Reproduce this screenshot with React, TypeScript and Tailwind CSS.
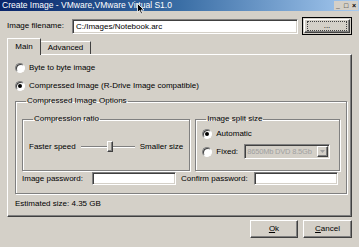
import React from "react";

const sunken =
  "border border-t-[#808080] border-l-[#808080] border-b-white border-r-white shadow-[inset_1px_1px_0_#404040,inset_-1px_-1px_0_#d4d0c8]";
const raised =
  "border border-t-white border-l-white border-b-[#404040] border-r-[#404040] shadow-[inset_-1px_-1px_0_#808080]";

function Radio({ checked, label }: { checked?: boolean; label: string }) {
  return (
    <div className="flex items-center gap-[4px] whitespace-nowrap">
      <span className="relative flex h-[10px] w-[10px] items-center justify-center rounded-full border border-t-[#808080] border-l-[#808080] border-b-white border-r-white bg-white shadow-[inset_1px_1px_0_#404040]">
        {checked && <span className="h-[4px] w-[4px] rounded-full bg-black" />}
      </span>
      <span>{label}</span>
    </div>
  );
}

function Group({
  title,
  className,
  children,
}: {
  title: string;
  className?: string;
  children: React.ReactNode;
}) {
  return (
    <fieldset className={"border border-[#808080] shadow-[1px_1px_0_white,inset_1px_1px_0_white] " + (className ?? "")}>
      <legend className="ml-[4px] px-[1px] leading-[10px]">{title}</legend>
      {children}
    </fieldset>
  );
}

export default function App() {
  return (
    <div
      className="relative h-[247px] w-[359px] overflow-hidden whitespace-nowrap bg-[#d4d0c8] text-[8px] leading-[10px] text-black"
      style={{ fontFamily: '"Liberation Sans", Arial, sans-serif' }}
    >
      {/* title bar */}
      <div className="flex h-[11px] items-center justify-between bg-gradient-to-r from-[#0a246a] via-[#3a6ea5] to-[#a6caf0] pl-[2px] pr-[1px]">
        <span className="text-[8.5px] leading-[11px] text-white">
          Create Image - VMware,VMware Virtual S1.0
        </span>
        <div className="flex">
          {["_", "□", "×"].map((c) => (
            <span
              key={c}
              className="flex h-[9px] w-[8px] items-center justify-center bg-[#d4d0c8] text-[7px] leading-[9px] font-bold"
            >
              {c}
            </span>
          ))}
        </div>
      </div>

      {/* cursor */}
      <svg className="absolute left-[137px] top-[3px]" width="8" height="12" viewBox="0 0 8 12">
        <path d="M0.5 0.5 L0.5 9.5 L2.5 7.5 L4 11 L5.5 10.3 L4 7 L7 7 Z" fill="black" stroke="white" strokeWidth="0.8" />
      </svg>

      <div className="px-[7px] pt-[6px]">
        {/* filename row */}
        <div className="flex items-center">
          <span className="w-[65px]">Image filename:</span>
          <div className={"h-[15px] w-[226px] bg-white px-[3px] leading-[13px] " + sunken}>
            C:/Images/Notebook.arc
          </div>
          <button className="ml-[4px] h-[18px] w-[50px] border border-black bg-[#d4d0c8] p-[1px]">
            <div className={"flex h-full w-full items-center justify-center " + raised}>
              <div className="flex h-[10px] w-[40px] items-center justify-center border border-dotted border-[#404040] leading-[6px]">
                ...
              </div>
            </div>
          </button>
        </div>

        {/* tabs */}
        <div className="mt-[3px] flex items-end">
          <div className="relative z-10 -mb-[1px] flex h-[17px] w-[34px] items-center justify-center border-l border-t border-r border-l-white border-t-white border-r-[#404040] bg-[#d4d0c8]">
            Main
          </div>
          <div className="flex h-[13px] w-[50px] items-center justify-center border-t border-r border-t-white border-r-[#404040] bg-[#d4d0c8]">
            Advanced
          </div>
        </div>

        {/* panel */}
        <div className="h-[163px] w-[345px] border border-t-white border-l-white border-b-[#404040] border-r-[#404040] px-[7px] pt-[8px] shadow-[inset_-1px_-1px_0_#808080]">
          <Radio label="Byte to byte image" />
          <div className="mt-[8px]">
            <Radio checked label="Compressed Image (R-Drive Image compatible)" />
          </div>

          <Group title="Compressed Image Options" className="mt-[5px] h-[98px] w-[329px] px-[6px]">
            <div className="mt-[8px] flex gap-[5px]">
              <Group title="Compression ratio" className="h-[57px] w-[167px] px-[6px]">
                <div className="mt-[17px] flex items-center">
                  <span>Faster speed</span>
                  <div className="relative ml-[5px] flex h-[11px] w-[54px] items-center">
                    <div className="h-[2px] w-full border-t border-t-[#808080] border-b border-b-white bg-black" />
                    <div className={"absolute left-[26px] top-0 h-[11px] w-[6px] bg-[#d4d0c8] " + raised} />
                  </div>
                  <span className="ml-[5px]">Smaller size</span>
                </div>
              </Group>
              <Group title="Image split size" className="h-[57px] w-[145px] px-[6px]">
                <div className="mt-[5px]">
                  <Radio checked label="Automatic" />
                </div>
                <div className="mt-[5px] flex items-center">
                  <div className="w-[42px]">
                    <Radio label="Fixed:" />
                  </div>
                  <div className={"relative h-[15px] w-[86px] overflow-hidden bg-[#d4d0c8] pl-[2px] text-[7.5px] leading-[13px] tracking-[-0.2px] " + sunken}>
                    <span className="text-[#a0a0a0]">8650Mb DVD 8.5Gb</span>
                    <div className={"absolute right-[1px] top-[1px] flex h-[11px] w-[11px] items-center justify-center bg-[#d4d0c8] " + raised}>
                      <svg width="5" height="3" viewBox="0 0 5 3">
                        <path d="M0 0 H5 L2.5 3 Z" fill="#a0a0a0" />
                      </svg>
                    </div>
                  </div>
                </div>
              </Group>
            </div>
            <div className="mt-[1px] flex items-center">
              <span className="w-[70px]">Image password:</span>
              <div className={"h-[13px] w-[84px] bg-white " + sunken} />
              <span className="ml-[5px] w-[73px]">Confirm password:</span>
              <div className={"h-[13px] w-[84px] bg-white " + sunken} />
            </div>
          </Group>

          <div className="mt-[5px]">Estimated size: 4.35 GB</div>
        </div>

        {/* buttons */}
        <div className="mt-[3px] flex justify-end gap-[5px]">
          <button className={"h-[18px] w-[48px] bg-[#d4d0c8] " + raised}>
            <span className="underline">O</span>k
          </button>
          <button className={"h-[18px] w-[49px] bg-[#d4d0c8] " + raised}>
            <span className="underline">C</span>ancel
          </button>
        </div>
      </div>
    </div>
  );
}
